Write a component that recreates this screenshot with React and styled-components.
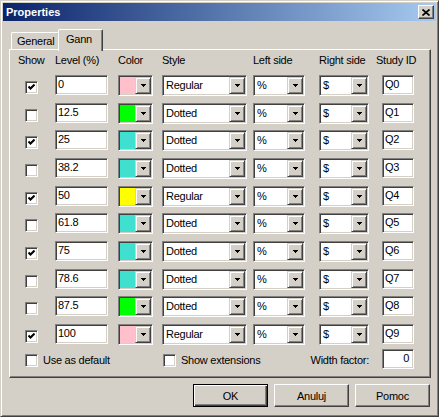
import React from 'react'
import styled, { createGlobalStyle, css } from 'styled-components'

const levels = [
  { show: true, level: '0', color: '#FFC0CB', style: 'Regular' },
  { show: false, level: '12.5', color: '#00FF00', style: 'Dotted' },
  { show: true, level: '25', color: '#40E0D0', style: 'Dotted' },
  { show: false, level: '38.2', color: '#40E0D0', style: 'Dotted' },
  { show: true, level: '50', color: '#FFFF00', style: 'Regular' },
  { show: false, level: '61.8', color: '#40E0D0', style: 'Dotted' },
  { show: true, level: '75', color: '#40E0D0', style: 'Dotted' },
  { show: false, level: '78.6', color: '#40E0D0', style: 'Dotted' },
  { show: false, level: '87.5', color: '#00FF00', style: 'Dotted' },
  { show: true, level: '100', color: '#FFC0CB', style: 'Regular' },
]

// column widths of the Gann level table
const COLS = '37px 63px 44px 91px 66px 57px 45px'

const GlobalStyle = createGlobalStyle`
  html, body {
    margin: 0;
    background: #D4D0C8;
  }
  body {
    font-family: "Liberation Sans", Arial, sans-serif;
    font-size: 11px;
    letter-spacing: -0.25px;
    color: #000;
  }
`

const raised = css`
  border: 1px solid;
  border-color: #fff #404040 #404040 #fff;
  box-shadow: inset -1px -1px #808080;
`

const sunken = css`
  border: 1px solid;
  border-color: #808080 #fff #fff #808080;
  box-shadow: inset 1px 1px #404040, inset -1px -1px #D4D0C8;
`

const Window = styled.div`
  width: 439px;
  height: 417px;
  box-sizing: border-box;
  background: #D4D0C8;
  border: 1px solid;
  border-color: #D4D0C8 #404040 #404040 #D4D0C8;
  box-shadow: inset 1px 1px #fff, inset -1px -1px #808080;
  padding: 2px;
  display: flex;
  flex-direction: column;
`

const TitleBar = styled.div`
  height: 18px;
  display: flex;
  align-items: center;
  justify-content: space-between;
  padding: 0 2px 0 3px;
  background: linear-gradient(to right, #0A246A, #A6CAF0);
`

const Title = styled.span`
  color: #fff;
  font-weight: bold;
  font-size: 11px;
  letter-spacing: 0;
`

const CloseButton = styled.div`
  width: 16px;
  height: 14px;
  box-sizing: border-box;
  background: #D4D0C8;
  ${raised};
  display: flex;
  align-items: center;
  justify-content: center;
`

const Content = styled.div`
  padding: 8px 5px 0 6px;
  display: flex;
  flex-direction: column;
`

const TabStrip = styled.div`
  height: 20px;
  display: flex;
  align-items: flex-end;
  padding-left: 2px;
  position: relative;
  z-index: 1;
`

const Tab = styled.div`
  width: ${p => p.$width}px;
  box-sizing: border-box;
  height: ${p => (p.$active ? 22 : 17)}px;
  margin-bottom: ${p => (p.$active ? -2 : 0)}px;
  margin-left: ${p => (p.$active ? -2 : 0)}px;
  padding: 0 0 ${p => (p.$active ? 4 : 1)}px ${p => (p.$active ? 7 : 5)}px;
  display: flex;
  align-items: center;
  background: #D4D0C8;
  border-top: 1px solid #fff;
  border-left: 1px solid #fff;
  border-right: 1px solid #404040;
  box-shadow: inset -1px 0 #808080;
  border-radius: 2px 2px 0 0;
`

const Panel = styled.div`
  width: 422px;
  height: 329px;
  box-sizing: border-box;
  ${raised};
  padding: 4px 0 0 8px;
  display: flex;
  flex-direction: column;
`

const Header = styled.div`
  display: grid;
  grid-template-columns: ${COLS};
  height: 14px;
  line-height: 13px;
  margin-bottom: 7px;
`

const Rows = styled.div`
  display: flex;
  flex-direction: column;
  gap: 7.67px;
`

const Row = styled.div`
  display: grid;
  grid-template-columns: ${COLS};
  align-items: start;
  height: 20px;
`

const Footer = styled.div`
  display: grid;
  grid-template-columns: ${COLS};
  grid-template-rows: 20px;
  align-items: center;
  margin-top: 5px;
`

const Box = styled.div`
  width: 13px;
  height: 13px;
  box-sizing: border-box;
  background: #fff;
  ${sunken};
  display: flex;
  align-items: center;
  justify-content: center;
  margin-left: ${p => p.$left || 0}px;
  margin-top: ${p => p.$top || 0}px;
  flex-shrink: 0;
`

const CheckLabel = styled.label`
  grid-row: 1;
  grid-column: ${p => p.$span};
  display: flex;
  align-items: center;
  gap: 5px;
  padding-left: ${p => p.$left}px;
  padding-top: 3px;
  white-space: nowrap;
`

const Field = styled.div`
  width: ${p => p.$width}px;
  height: 20px;
  box-sizing: border-box;
  background: #fff;
  ${sunken};
  padding: 0 ${p => (p.$right ? 4 : 0)}px 0 2px;
  line-height: 17px;
  text-align: ${p => (p.$right ? 'right' : 'left')};
  margin-left: ${p => p.$left || 0}px;
`

const FactorField = styled(Field)`
  grid-row: 1;
  grid-column: 7;
`

const Combo = styled.div`
  width: ${p => p.$width}px;
  height: 21px;
  box-sizing: border-box;
  ${sunken};
  padding: 1px;
  display: flex;
  background: #fff;
`

const ComboValue = styled.div`
  flex: 1;
  background: ${p => p.$fill || '#fff'};
  padding-left: 2px;
  line-height: 17px;
`

const ArrowButton = styled.div`
  width: 16px;
  box-sizing: border-box;
  background: #D4D0C8;
  border: 1px solid;
  border-color: #D4D0C8 #404040 #404040 #D4D0C8;
  box-shadow: inset 1px 1px #fff, inset -1px -1px #808080;
  display: flex;
  align-items: center;
  justify-content: center;
`

const WidthLabel = styled.span`
  grid-row: 1;
  grid-column: 5 / 7;
  justify-self: end;
  margin-right: 7px;
  padding-top: 3px;
`

const ButtonBar = styled.div`
  display: flex;
  justify-content: flex-end;
  gap: 6px;
  margin-top: 6px;
  padding-right: 1px;
`

const Button = styled.div`
  width: 75px;
  height: 23px;
  box-sizing: border-box;
  display: flex;
  align-items: center;
  justify-content: center;
  background: #D4D0C8;
  ${p =>
    p.$default
      ? css`
          border: 1px solid #000;
          box-shadow: inset 1px 1px #fff, inset -1px -1px #404040,
            inset -2px -2px #808080;
        `
      : raised}
`

const Check = () => (
  <svg width="7" height="7" viewBox="0 0 7 7">
    <path d="M0.5 2.5 L2.5 4.5 L6.5 0.5" stroke="#000" strokeWidth="2" fill="none" />
  </svg>
)

const Arrow = () => (
  <svg width="5" height="3" viewBox="0 0 5 3" shapeRendering="crispEdges">
    <polygon points="0,0 5,0 2.5,3" fill="#000" />
  </svg>
)

const CloseIcon = () => (
  <svg width="8" height="7" viewBox="0 0 8 7">
    <path d="M0.5 0.5 L7.5 6.5 M7.5 0.5 L0.5 6.5" stroke="#000" strokeWidth="1.7" />
  </svg>
)

const Checkbox = ({ checked, left, top }) => (
  <Box $left={left} $top={top}>{checked && <Check />}</Box>
)

const Dropdown = ({ width, value, fill }) => (
  <Combo $width={width}>
    <ComboValue $fill={fill}>{value}</ComboValue>
    <ArrowButton><Arrow /></ArrowButton>
  </Combo>
)

const App = () => {
  return (
    <>
      <GlobalStyle />
      <Window>
        <TitleBar>
          <Title>Properties</Title>
          <CloseButton><CloseIcon /></CloseButton>
        </TitleBar>
        <Content>
          <TabStrip>
            <Tab $width={49}>General</Tab>
            <Tab $width={45} $active>Gann</Tab>
          </TabStrip>
          <Panel>
            <Header>
              <span>Show</span>
              <span>Level (%)</span>
              <span>Color</span>
              <span>Style</span>
              <span>Left side</span>
              <span>Right side</span>
              <span>Study ID</span>
            </Header>
            <Rows>
              {levels.map((l, i) => (
                <Row key={i}>
                  <Checkbox checked={l.show} left={7} top={6} />
                  <Field $width={53}>{l.level}</Field>
                  <Dropdown width={35} fill={l.color} />
                  <Dropdown width={85} value={l.style} />
                  <Dropdown width={52} value="%" />
                  <Dropdown width={50} value="$" />
                  <Field $width={32} $left={6}>Q{i}</Field>
                </Row>
              ))}
            </Rows>
            <Footer>
              <CheckLabel $span="1 / 4" $left={7}>
                <Checkbox />
                Use as default
              </CheckLabel>
              <CheckLabel $span="4 / 6" $left={1}>
                <Checkbox />
                Show extensions
              </CheckLabel>
              <WidthLabel>Width factor:</WidthLabel>
              <FactorField $width={32} $left={6} $right>0</FactorField>
            </Footer>
          </Panel>
          <ButtonBar>
            <Button $default>OK</Button>
            <Button>Anuluj</Button>
            <Button>Pomoc</Button>
          </ButtonBar>
        </Content>
      </Window>
    </>
  )
}

export default App
